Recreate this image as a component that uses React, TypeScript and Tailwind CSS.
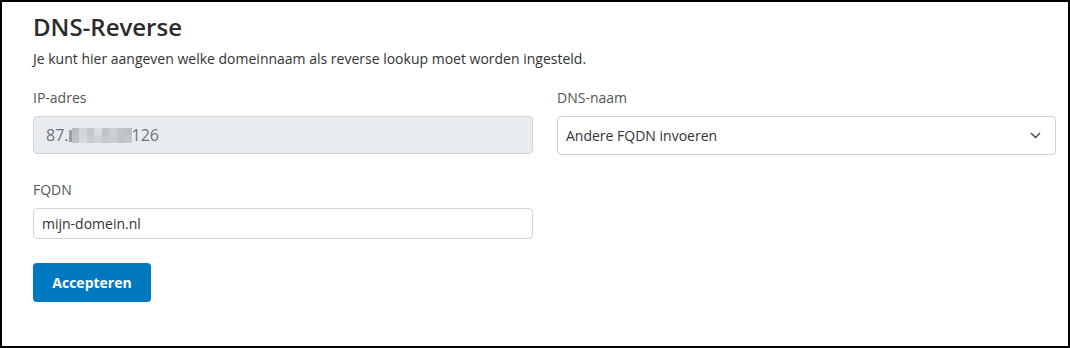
export default function App() {
  const blurTop = ['#b9bcc0', '#d3d6d9', '#c4c7cb', '#dadde0', '#bfc2c6', '#cfd2d5', '#c2c5c9', '#bcbfc3'];
  const blurBottom = ['#c0c3c7', '#d6d9dc', '#c9ccd0', '#d0d3d6', '#c5c8cc', '#c9ccd0', '#bfc2c6', '#c3c6ca'];

  return (
    <div className="w-[1070px] h-[348px] border-2 border-black bg-white pl-[31px] pt-[9px] font-['Open_Sans',sans-serif] text-[#333]">
      <h1 className="text-[24px] leading-[32px] font-semibold text-[#2b2b2b]">DNS-Reverse</h1>
      <p className="mt-[6px] text-[14px] leading-[20px] text-[#333]">
        Je kunt hier aangeven welke domeinnaam als reverse lookup moet worden ingesteld.
      </p>

      <div className="mt-[19px] grid grid-cols-[500px_499px] gap-x-[24px]">
        {/* IP-adres */}
        <div>
          <label className="block text-[14px] leading-[20px] text-[#555] mb-[8px]">IP-adres</label>
          <div className="h-[38px] rounded-[4px] border border-[#ced4da] bg-[#e9ecef] px-[12px] flex items-center text-[16px] text-[#6c757d]">
            <span>87.</span>
            <span className="w-[3px] h-[12px] mt-[1px] bg-[#9a9ea3]" />
            <span className="flex flex-col w-[60px] h-[15px] mt-[1px]">
              <span className="flex h-[7px]">
                {blurTop.map((c, i) => (
                  <span key={i} className="flex-1" style={{ backgroundColor: c }} />
                ))}
              </span>
              <span className="flex h-[8px]">
                {blurBottom.map((c, i) => (
                  <span key={i} className="flex-1" style={{ backgroundColor: c }} />
                ))}
              </span>
            </span>
            <span>126</span>
          </div>
        </div>

        {/* DNS-naam */}
        <div>
          <label className="block text-[14px] leading-[20px] text-[#555] mb-[8px]">DNS-naam</label>
          <div className="h-[39px] rounded-[4px] border border-[#ced4da] bg-white pl-[8px] pr-[14px] flex items-center justify-between text-[14px] text-[#333]">
            <span>Andere FQDN invoeren</span>
            <svg width="11" height="7" viewBox="0 0 11 7" fill="none">
              <polyline points="1,1 5.5,5.5 10,1" stroke="#444" strokeWidth="1.4" />
            </svg>
          </div>
        </div>

        {/* FQDN */}
        <div className="mt-[25px]">
          <label className="block text-[14px] leading-[20px] text-[#555] mb-[8px]">FQDN</label>
          <div className="h-[31px] rounded-[4px] border border-[#ced4da] bg-white px-[8px] flex items-center text-[14px] text-[#333]">
            mijn-domein.nl
          </div>
        </div>
      </div>

      <button className="mt-[24px] h-[39px] w-[118px] rounded-[4px] bg-[#0079c1] text-white text-[14px] font-bold">
        Accepteren
      </button>
    </div>
  );
}
